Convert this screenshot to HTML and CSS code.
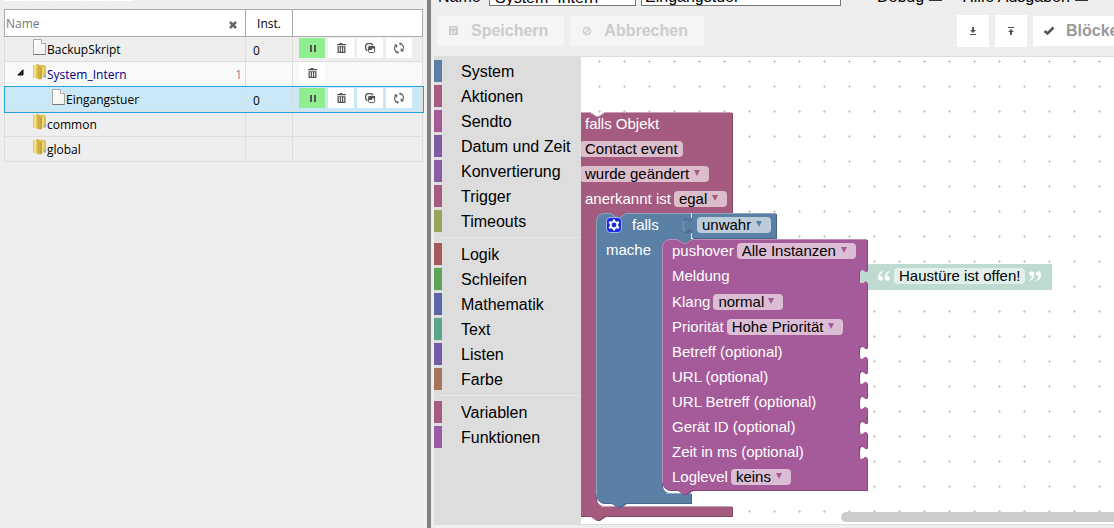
FILE: index.html
```html
<!DOCTYPE html>
<html lang="de">
<head>
<meta charset="utf-8">
<title>Skripte</title>
<link rel="stylesheet" href="styles.css">
</head>
<body>
<svg class="sprite" aria-hidden="true">
  <defs>
    <linearGradient id="gold" x1="0" x2="1" y1="0" y2="0">
      <stop offset="0" stop-color="#dfc050"/><stop offset=".35" stop-color="#f8e99e"/><stop offset=".6" stop-color="#e0c04e"/><stop offset="1" stop-color="#c9a437"/>
    </linearGradient>
    <linearGradient id="paper" x1="0" x2="1" y1="0" y2="1">
      <stop offset="0" stop-color="#ffffff"/><stop offset="1" stop-color="#eef2ec"/>
    </linearGradient>
  </defs>
  <symbol id="i-page" viewBox="0 0 13 16">
    <path d="M.5.5h8l4 4v11H.5z" fill="url(#paper)" stroke="#a9a9a9"/>
    <path d="M.5 15.500h12" stroke="#777"/>
    <path d="M8.500.5v4h4" fill="#fff" stroke="#a9a9a9"/>
  </symbol>
  <symbol id="i-folder" viewBox="0 0 13 16">
    <path d="M5 1.500h6.500l1 1V13H5z" fill="#e2c65c" stroke="#cdaa45" stroke-width=".6"/>
    <path d="M0 1.200 4.500 0l2 1v14.500L0 13.500z" fill="url(#gold)"/>
    <path d="M6.500 3h2.500v12l-2.500.5z" fill="#cda73a"/>
    <path d="M9.500 3h1v10h-1z" fill="#f5e596"/>
    <path d="M11.300 10.500h1.400v3h-1.400z" fill="#56b8e8"/>
  </symbol>
  <symbol id="i-pause" viewBox="0 0 16 16"><path d="M6 5h2v7H6zM10 5h2v7h-2z"/></symbol>
  <symbol id="i-trash" viewBox="0 0 16 16">
    <path d="M6.500 3h3v1H13v1.300H4V4h2.500z"/>
    <path fill-rule="evenodd" d="M4.500 6.300h8V13h-8zM5.800 7.300v4.500h1V7.300zM8 7.300v4.500h1V7.300zM10.200 7.300v4.500h1V7.300z"/>
  </symbol>
  <symbol id="i-copy" viewBox="0 0 16 16">
    <path d="M5.500 10.500H5L3.700 9V5.200L5.200 3.700h4.300L11 5.200" fill="none" stroke="#555" stroke-width="1.300"/>
    <rect x="6.600" y="6.600" width="6" height="6" rx="1" fill="#fff" stroke="#555" stroke-width="1"/>
    <path d="M6.500 6h6.500v2.500h-3V10H6.500z"/>
  </symbol>
  <symbol id="i-refresh" viewBox="0 0 16 16">
    <path d="M6.200 12.500A4.500 4.500 0 0 1 5 5.100M9.800 3.500A4.500 4.500 0 0 1 11 10.900M3.500 5h2.200v2.500M12.500 11h-2.200V8.500" fill="none" stroke="#555" stroke-width="1.100"/>
    <path d="M7.800 3.800 9.800 2.300v3.200zM8.200 12.200 6.200 10.700v3.200z"/>
  </symbol>
</svg>

<div class="app">
  <aside class="tree-pane">
    <div class="tree-toolbar">
      <button aria-label="Neu"></button><button aria-label="Ordner"></button><button aria-label="Bearbeiten"></button><button aria-label="Export"></button><button aria-label="Import"></button>
    </div>
    <table class="tree">
      <colgroup><col class="col-name"><col class="col-inst"><col></colgroup>
      <thead>
        <tr>
          <th><div class="filter"><input type="text" placeholder="Name" aria-label="Name"><button class="clear" aria-label="Filter leeren"><svg width="8" height="8" viewBox="0 0 8 8"><path d="M1 1l6 6M7 1 1 7" stroke="#666" stroke-width="2.600"/></svg></button></div></th>
          <th class="inst-head">Inst.</th>
          <th></th>
        </tr>
      </thead>
      <tbody>
        <tr>
          <td><div class="node"><svg class="node-icon"><use href="#i-page"/></svg><span>BackupSkript</span></div></td>
          <td class="inst">0</td>
          <td><div class="actions">
            <button class="run" aria-label="Pause"><svg><use href="#i-pause"/></svg></button><button aria-label="Löschen"><svg><use href="#i-trash"/></svg></button><button aria-label="Kopieren"><svg><use href="#i-copy"/></svg></button><button aria-label="Neu starten"><svg><use href="#i-refresh"/></svg></button>
          </div></td>
        </tr>
        <tr class="open">
          <td><div class="node"><svg class="twisty" viewBox="0 0 7 7"><path d="M6 .8V6H.8z" fill="#333" stroke="#000"/></svg><svg class="node-icon"><use href="#i-folder"/></svg><span>System_Intern</span><span class="count">1</span></div></td>
          <td></td>
          <td><div class="actions"><button aria-label="Löschen"><svg><use href="#i-trash"/></svg></button></div></td>
        </tr>
        <tr class="selected">
          <td><div class="node child"><svg class="node-icon"><use href="#i-page"/></svg><span>Eingangstuer</span></div></td>
          <td class="inst">0</td>
          <td><div class="actions">
            <button class="run" aria-label="Pause"><svg><use href="#i-pause"/></svg></button><button aria-label="Löschen"><svg><use href="#i-trash"/></svg></button><button aria-label="Kopieren"><svg><use href="#i-copy"/></svg></button><button aria-label="Neu starten"><svg><use href="#i-refresh"/></svg></button>
          </div></td>
        </tr>
        <tr><td><div class="node"><svg class="node-icon"><use href="#i-folder"/></svg><span>common</span></div></td><td></td><td></td></tr>
        <tr><td><div class="node"><svg class="node-icon"><use href="#i-folder"/></svg><span>global</span></div></td><td></td><td></td></tr>
      </tbody>
    </table>
  </aside>
  <div class="splitter"></div>
  <main class="editor">
    <div class="meta">
      <label for="group">Name</label>
      <select id="group"><option>System_Intern</option></select>
      <input id="script-name" type="text" value="Eingangstuer" aria-label="Skriptname">
      <label class="check">Debug <input type="checkbox"></label>
      <label class="check">Hilfe Ausgaben <input type="checkbox"></label>
    </div>
    <div class="toolbar">
      <button class="action" disabled><svg width="10" height="10" viewBox="0 0 10 10"><path fill-rule="evenodd" d="M1 0h7l1 1v8H0V1zM1.500 1.500v1h6v-1zM2 5v3h1.500V5zM5 5v3h.8V6.200H7V5z"/></svg>Speichern</button>
      <button class="action" disabled><svg width="10" height="10" viewBox="0 0 10 10"><circle cx="5" cy="5" r="3.500" fill="none" stroke="currentColor" stroke-width="1.500"/><path d="M2.500 7.500l5-5" stroke="currentColor" stroke-width="1.500"/></svg>Abbrechen</button>
      <span class="spacer"></span>
      <button class="square" aria-label="Import"><svg width="8" height="10" viewBox="0 0 8 10"><path d="M3 1h2v3h2L4 7 1 4h2zM1 8h6v1H1z"/></svg></button>
      <button class="square" aria-label="Export"><svg width="8" height="10" viewBox="0 0 8 10"><path d="M1 1h6v1H1zM4 3l3 3H5v3H3V6H1z"/></svg></button>
      <button class="action check-blocks"><svg width="12" height="10" viewBox="0 0 12 10"><path d="M1.500 5 4.500 7.500 10.500 1.500" fill="none" stroke="#555" stroke-width="2.600"/></svg>Blöcke</button>
    </div>
    <div class="blockly">
      <nav class="toolbox">
        <button class="c-logic">System</button>
        <button class="c-trigger">Aktionen</button>
        <button class="c-sendto">Sendto</button>
        <button class="c-date">Datum und Zeit</button>
        <button class="c-convert">Konvertierung</button>
        <button class="c-trigger">Trigger</button>
        <button class="c-timeouts">Timeouts</button>
        <hr>
        <button class="c-red">Logik</button>
        <button class="c-loops">Schleifen</button>
        <button class="c-math">Mathematik</button>
        <button class="c-text">Text</button>
        <button class="c-lists">Listen</button>
        <button class="c-colour">Farbe</button>
        <hr>
        <button class="c-trigger">Variablen</button>
        <button class="c-functions">Funktionen</button>
      </nav>
      <section class="workspace">
        <svg class="canvas" aria-hidden="true">
          <defs>
            <pattern id="grid" x="6" y="-8" width="25" height="25" patternUnits="userSpaceOnUse">
              <path d="M11 12.500h3M12.500 11v3" stroke="#ccc"/>
            </pattern>
            <path id="b-on" d="M-6 55H9l6 4h3l6-4H151V156H45l-6 4h-3l-6-4H23a8 8 0 0 0-8 8V441a8 8 0 0 0 8 8H151V459H24l-6 4h-3l-6-4H-6z"/>
            <path id="b-if" d="M15 164a8 8 0 0 1 8-8H30l6 4h3l6-4H110V161c0 10-8-8-8 7.500s8-2.500 8 7.500V182l-6 4h-3l-6-4H89a8 8 0 0 0-8 8V428a8 8 0 0 0 8 8H110V446H45l-6 4h-3l-6-4H23a8 8 0 0 1-8-8z"/>
            <path id="b-false" d="M111 156H195V181H111V176c0-10-8 8-8-7.500s8 2.500 8-7.500z"/>
            <path id="b-push" d="M81 190a8 8 0 0 1 8-8H96l6 4h3l6-4H286V212c0 10-8-8-8 7.500s8-2.500 8 7.500V288c0 10-8-8-8 7.500s8-2.500 8 7.500v10c0 10-8-8-8 7.500s8-2.500 8 7.500v10c0 10-8-8-8 7.500s8-2.500 8 7.500v10c0 10-8-8-8 7.500s8-2.500 8 7.500v10c0 10-8-8-8 7.500s8-2.500 8 7.500V433H111l-6 4h-3l-6-4H89a8 8 0 0 1-8-8z"/>
          </defs>
          <rect width="100%" height="100%" fill="url(#grid)"/>
          <use href="#b-on" x="1" y="1" fill="#844966"/>
          <use href="#b-on" fill="#a55b80"/>
          <path d="M-6 55.500H9l6 4h3l6-4H151M20 449.500H151" fill="none" stroke="#c9a0b5"/>
          <use href="#b-if" x="1" y="1" fill="#496684"/>
          <use href="#b-if" fill="#5b80a5"/>
          <path d="M15.500 438V164a7.500 7.500 0 0 1 7.500-7.500H30l6 4h3l6-4H110M85 436.500H110" fill="none" stroke="#8ca6c0"/>
          <use href="#b-false" x="1" y="1" fill="#496684"/>
          <use href="#b-false" fill="#5b80a5"/>
          <path d="M195 156.500H111" fill="none" stroke="#8ca6c0"/>
          <path d="M110.500 156V161M110.500 176V182" fill="none" stroke="#dbe4ec"/>
          <path d="M110.500 161c0 10-8-8-8 7.500s8-2.500 8 7.500" fill="none" stroke="#496684"/>
          <path d="M103.500 174.500c-2-2-1.500-8-.500-11" fill="none" stroke="#8ca6c0"/>
          <use href="#b-push" x="1" y="1" fill="#84497a"/>
          <use href="#b-push" fill="#a55b99"/>
          <path d="M81.500 425V190a7.500 7.500 0 0 1 7.500-7.500H96l6 4h3l6-4H286" fill="none" stroke="#c08cb8"/>
          <path d="M287 207H471V233H287V227c0-10-8 8-8-7.500s8 2.500 8-7.500z" fill="#bddbd1"/>
        </svg>

        <div class="fields block-on">
          <div class="row">falls Objekt</div>
          <div class="row"><button class="field outdent">Contact event</button></div>
          <div class="row"><span class="drop outdent"><select aria-label="Auslöser"><option>wurde geändert</option></select></span></div>
          <div class="row"><label for="ack">anerkannt ist</label><span class="drop"><select id="ack"><option>egal</option></select></span></div>
        </div>
        <div class="fields block-if">
          <div class="row">
            <button class="gear" aria-label="Block bearbeiten"><svg width="12" height="12" viewBox="0 0 12 12"><path fill="#fff" fill-rule="evenodd" d="M5 .5h2l.4 1.700 1.200.6 1.600-.7 1.200 1.700L10.200 5v2l1.200 1.200-1.200 1.700-1.600-.7-1.200.6L7 11.500H5l-.4-1.700-1.200-.6-1.600.7L.6 8.200 1.800 7V5L.6 3.800l1.200-1.700 1.600.7 1.200-.6zM6 3.600a2.400 2.400 0 1 0 0 4.800 2.400 2.400 0 0 0 0-4.800z"/></svg></button>
            <label for="cond">falls</label>
          </div>
          <div class="row">mache</div>
        </div>
        <div class="fields block-false">
          <div class="row"><span class="drop"><select id="cond"><option>unwahr</option></select></span></div>
        </div>
        <div class="fields block-push">
          <div class="row"><label for="inst">pushover</label><span class="drop"><select id="inst"><option>Alle Instanzen</option></select></span></div>
          <div class="row tall"><label for="msg">Meldung</label></div>
          <div class="row"><label for="sound">Klang</label><span class="drop"><select id="sound"><option>normal</option></select></span></div>
          <div class="row"><label for="prio">Priorität</label><span class="drop"><select id="prio"><option>Hohe Priorität</option></select></span></div>
          <div class="row">Betreff (optional)</div>
          <div class="row">URL (optional)</div>
          <div class="row">URL Betreff (optional)</div>
          <div class="row">Gerät ID (optional)</div>
          <div class="row">Zeit in ms (optional)</div>
          <div class="row"><label for="log">Loglevel</label><span class="drop"><select id="log"><option>keins</option></select></span></div>
        </div>
        <div class="fields block-text">
          <div class="row">
            <svg width="12" height="10" viewBox="0 0 12 10"><path id="quote" fill="#fff" d="M4.800 0C1.500 1 0 3.300 0 6.300 0 8.500 1 9.800 2.700 9.800 4.100 9.800 5 8.800 5 7.500 5 6.200 4.200 5.300 2.900 5.300 2.500 5.300 2.300 5.300 2.200 5.400 2.300 3.300 3.200 1.800 5 .7zM11.600 0C8.300 1 6.800 3.300 6.800 6.300c0 2.200 1 3.500 2.700 3.500 1.400 0 2.300-1 2.300-2.300 0-1.300-.8-2.200-2.100-2.200-.4 0-.6 0-.7.1.1-2.100 1-3.600 2.800-4.700z"/></svg>
            <input id="msg" type="text" value="Haustüre ist offen!">
            <svg class="close-quote" width="12" height="10" viewBox="0 0 12 10"><use href="#quote"/></svg>
          </div>
        </div>
        <div class="scrollbar"></div>
      </section>
    </div>
  </main>
</div>
</body>
</html>
```
FILE: styles.css
```css
* { box-sizing: border-box; }
html, body { height: 100%; }
body {
  margin: 0;
  background: #eee;
  color: #000;
  font-family: "Liberation Sans", Arial, sans-serif;
  font-size: 16px;
  overflow: hidden;
}
button, input, select { font: inherit; color: inherit; margin: 0; }
button { border: 0; padding: 0; }
.sprite { position: absolute; width: 0; height: 0; }

.app {
  display: grid;
  grid-template-columns: 427px 4px minmax(0, 1fr);
  height: 100vh;
  overflow: hidden;
}
.splitter { background: #808080; }

/* script tree */
.tree-pane { padding: 0 4px; font-family: "Open Sans", "Noto Sans", sans-serif; font-size: 12px; }
.tree-toolbar { display: flex; gap: 1px; margin-top: -23px; margin-bottom: 8px; }
.tree-toolbar button { width: 25px; height: 24px; background: #fff; }
.tree { width: 100%; table-layout: fixed; border-collapse: collapse; }
.col-name { width: 241px; }
.col-inst { width: 47px; }
.tree th { height: 27px; padding: 0; background: #fff; border: 1px solid #aaa; font-weight: 400; }
.tree td { height: 25px; padding: 0; border: 1px solid #ddd; }
.tree tbody tr:first-child td { border-top-color: #aaa; }
.filter { display: flex; align-items: center; padding: 0 8px 0 1px; }
.filter input { flex: 1; min-width: 0; padding: 0; border: 0; outline: 0; background: none; }
.filter input::placeholder { color: #777; opacity: 1; }
.clear { display: flex; background: none; padding-top: 3px; }
.node { display: flex; align-items: center; height: 24px; padding-left: 28px; position: relative; }
.node.child { padding-left: 47px; }
.node-icon { width: 13px; height: 16px; margin-bottom: 5px; margin-right: 1px; }
.node span { line-height: 20px; padding-top: 2px; }
.twisty { position: absolute; left: 12px; top: 7px; width: 7px; height: 7px; }
.node .count { margin-left: auto; padding-right: 3px; color: #a08090; }
.open { background: #f9f9f9; }
.open .node { color: #000080; }
.selected { background: #cbe8f6; outline: 1px solid #26a0da; }
.tree .inst { padding: 2px 0 0 7px; }
.actions { display: flex; gap: 3px; height: 24px; padding: 1px 0 0 6px; }
.actions button { display: flex; align-items: center; justify-content: center; width: 26px; height: 20px; background: #fff; }
.actions .run { background: #90ee90; }
.actions svg { width: 16px; height: 16px; fill: #555; }

/* editor head */
.editor { display: flex; flex-direction: column; min-width: 0; padding: 0 0 3px 3px; }
.meta { display: flex; align-items: center; height: 22px; margin-top: -16px; padding-left: 4px; white-space: nowrap; }
.meta > label { padding-top: 4px; }
.meta > label:first-child { width: 51px; flex: none; }
.meta select { appearance: none; width: 147px; height: 22px; padding: 4px 5px 0; border: 1px solid #777; border-radius: 0; background: #fff; flex: none; }
.meta > input { width: 200px; height: 22px; margin: 0 36px 0 5px; padding: 4px 3px 0; border: 1px solid #777; background: #fff; flex: none; }
.check { display: flex; align-items: center; gap: 5px; margin-right: 20px; }
.check input { appearance: none; width: 13px; height: 13px; margin-bottom: 6px; border: 1px solid #333; background: #fff; }
.toolbar { display: flex; align-items: center; gap: 6px; height: 50px; padding-left: 3px; flex: none; }
.toolbar .spacer { flex: 1; }
.action { display: flex; align-items: center; height: 30px; padding: 0 16px 0 12px; background: #fff; color: #999; font-weight: 700; white-space: nowrap; flex: none; }
.action svg { flex: none; margin-right: 12px; fill: currentColor; }
.action:disabled { background: #f5f5f5; color: #ccc; }
.check-blocks { width: 81px; padding: 0 0 0 10px; overflow: hidden; }
.check-blocks svg { margin-right: 11px; }
.square { display: flex; align-items: center; justify-content: center; width: 32px; height: 32px; background: #fff; }
.square svg { fill: #555; }

/* block editor */
.blockly { display: flex; flex: 1; min-height: 0; }
.toolbox { flex: none; width: 147px; padding-top: 4px; background: #ddd; }
.toolbox button { display: block; width: 100%; height: 22px; margin-bottom: 3px; padding-top: 1px; padding-left: 19px; border-left-style: solid; border-left-width: 8px; background: none; text-align: left; white-space: nowrap; line-height: 22px; }
.toolbox hr { height: 1px; margin: 5px 0 5px 6px; border: 0; background: #e8e8e8; }
.c-logic { border-color: #5b80a5; }
.c-trigger { border-color: #a55b80; }
.c-sendto { border-color: #a55b99; }
.c-date { border-color: #805ba5; }
.c-convert { border-color: #8c5ba5; }
.c-timeouts { border-color: #99a55b; }
.c-red { border-color: #a55b5b; }
.c-loops { border-color: #5ba55b; }
.c-math { border-color: #5b67a5; }
.c-text { border-color: #5ba58c; }
.c-lists { border-color: #745ba5; }
.c-colour { border-color: #a5745b; }
.c-functions { border-color: #995ba5; }

.workspace { position: relative; flex: 1; min-width: 0; overflow: hidden; background: #fff; border: 1px solid #ddd; border-width: 1px 0; }
.canvas { position: absolute; inset: 0; width: 100%; height: 100%; }

/* block contents sit at free positions on the canvas */
.fields { position: absolute; color: #fff; font-size: 15px; line-height: 16px; white-space: nowrap; }
.block-on { left: 4px; top: 54px; }
.block-if { left: 25px; top: 155px; }
.block-false { left: 116px; top: 155px; }
.block-push { left: 91px; top: 181px; }
.block-text { left: 297px; top: 207px; }
.row { display: flex; align-items: center; gap: 3px; height: 25px; }
.row.tall { height: 26px; }
.field, .drop { border-radius: 4px; background: rgba(255, 255, 255, .6); color: #000; }
.field { height: 16px; padding: 0 5px; }
.outdent { margin-left: -5px; }
.drop { position: relative; display: flex; }
.drop select { appearance: none; height: 16px; padding: 0 19px 0 5px; border: 0; outline: 0; background: none; line-height: 16px; }
.drop::after {
  content: "";
  position: absolute;
  right: 9px;
  top: 4px;
  border: 3px solid transparent;
  border-top: 6px solid #a55b80;
  border-bottom: 0;
  pointer-events: none;
}
.block-false .drop::after { border-top-color: #5b80a5; }
.block-push .drop::after { border-top-color: #a55b99; }
.gear { display: flex; align-items: center; justify-content: center; width: 16px; height: 16px; margin-right: 7px; border: 1px solid #9fb0e8; border-radius: 4px; background: #1c2ce0; }
.block-text .row { gap: 4px; height: 24px; }
.block-text input { width: 131px; height: 16px; padding: 0 3px 0 5px; border: 0; border-radius: 4px; background: #e2f0ec; color: #000; }
.close-quote { transform: rotate(180deg); }
.scrollbar { position: absolute; left: 260px; right: -5px; bottom: 2px; height: 10px; border-radius: 5px; background: #ccc; }
```
